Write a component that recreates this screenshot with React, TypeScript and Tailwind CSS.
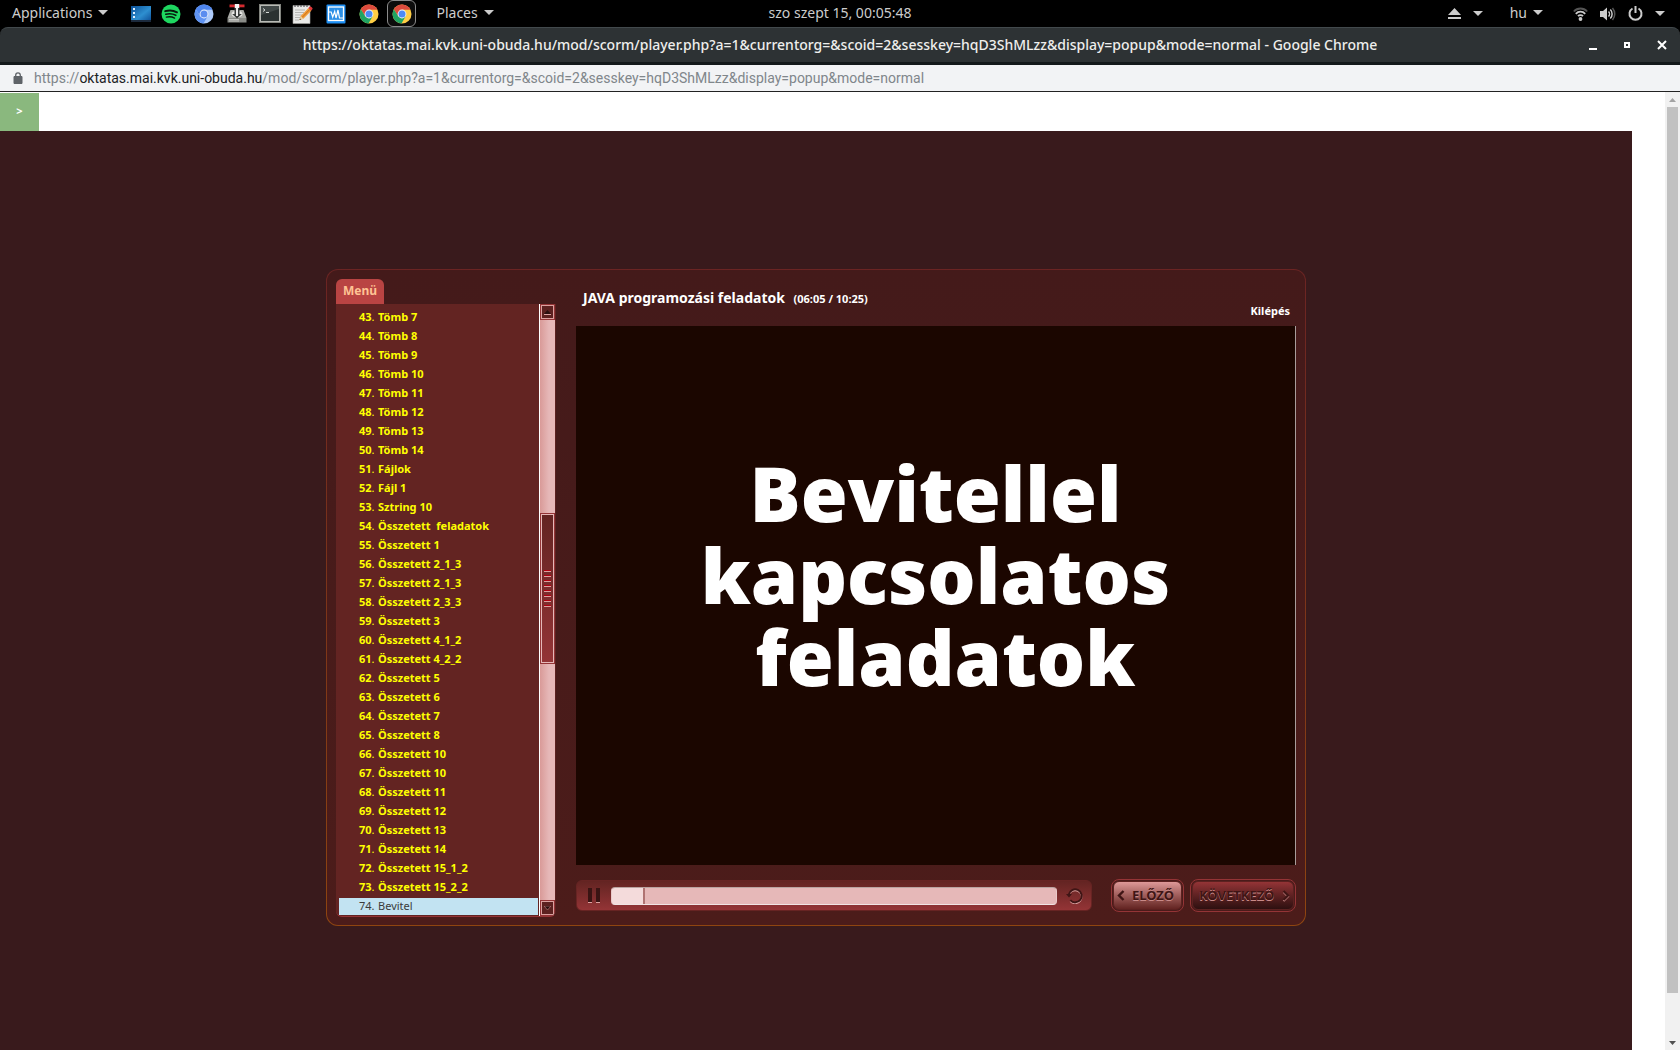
import React from 'react';

const chapters = [
  'Tömb 6_2', 'Tömb 7', 'Tömb 8', 'Tömb 9', 'Tömb 10', 'Tömb 11', 'Tömb 12', 'Tömb 13', 'Tömb 14',
  'Fájlok', 'Fájl 1', 'Sztring 10', 'Összetett  feladatok', 'Összetett 1', 'Összetett 2_1_3',
  'Összetett 2_1_3', 'Összetett 2_3_3', 'Összetett 3', 'Összetett 4_1_2', 'Összetett 4_2_2',
  'Összetett 5', 'Összetett 6', 'Összetett 7', 'Összetett 8', 'Összetett 10', 'Összetett 10',
  'Összetett 11', 'Összetett 12', 'Összetett 13', 'Összetett 14', 'Összetett 15_1_2',
  'Összetett 15_2_2', 'Bevitel',
];
const FIRST = 42;
const CURRENT = 74;

function Caret() {
  return (
    <svg width="10" height="5" viewBox="0 0 10 5" aria-hidden="true">
      <path d="M0 0h10L5 5z" fill="#ccc" />
    </svg>
  );
}

function DesktopIcon() {
  return (
    <svg width="20" height="16" viewBox="0 0 20 16" aria-hidden="true">
      <defs>
        <linearGradient id="desk" x1="0" y1="0" x2="1" y2="1">
          <stop offset="0" stopColor="#0b4f96" />
          <stop offset="0.55" stopColor="#2e8fd0" />
          <stop offset="1" stopColor="#0b4a94" />
        </linearGradient>
      </defs>
      <rect width="20" height="16" fill="url(#desk)" />
      <rect y="14" width="20" height="2" fill="#1c2a3c" />
      <path d="M2 2h2v2H2zM2 6h2v2H2zM2 10h2v2H2z" fill="#dff0ff" />
    </svg>
  );
}

function SpotifyIcon() {
  return (
    <svg width="20" height="20" viewBox="0 0 20 20" aria-hidden="true">
      <circle cx="10" cy="10" r="9.5" fill="#1ed760" />
      <g fill="none" stroke="#06180c" strokeLinecap="round">
        <path d="M4.2 7.2c4-1.2 8.300-.8 11.800 1.100" strokeWidth="1.900" />
        <path d="M4.800 10.300c3.500-1 7-.6 10 1" strokeWidth="1.600" />
        <path d="M5.300 13.200c3-.8 5.800-.5 8.300.9" strokeWidth="1.300" />
      </g>
    </svg>
  );
}

function ChromeIcon({ colors, center }: { colors: [string, string, string]; center: string }) {
  return (
    <svg width="20" height="20" viewBox="0 0 20 20" aria-hidden="true">
      <circle cx="10" cy="10" r="9.500" fill={colors[2]} />
      <path d="M10 5.700h8.500A9.500 9.500 0 0 0 1.800 5.200L6.300 12.200 10 10z" fill={colors[0]} />
      <path d="M1.800 5.200A9.500 9.500 0 0 0 9.500 19.500L13.800 12.100 10 14.300 6.300 12.200z" fill={colors[1]} />
      <circle cx="10" cy="10" r="4.400" fill="#f3f6fb" />
      <circle cx="10" cy="10" r="3.500" fill={center} />
    </svg>
  );
}

function InstallerIcon() {
  return (
    <svg width="20" height="20" viewBox="0 0 20 20" aria-hidden="true">
      <path d="M3.500 6h13l3 8H.5z" fill="#a9aaa6" />
      <path d="M.5 14h19v4.500H.5z" fill="#8a8c88" />
      <path d="M2 15.500h10M2 17h10" stroke="#d8d9d6" strokeWidth=".8" />
      <ellipse cx="10" cy="10" rx="5.500" ry="3.600" fill="#e6e6e4" />
      <path d="M7.500 2h5v8h2.300L10 14.500 5.200 10h2.300z" fill="#3a3d3c" />
      <path d="M9 3h2v9H9z" fill="#ececec" />
      <path d="M2.500.5h15v2.800h-15z" fill="#d42a2f" />
      <path d="M7.800 0h4.400v4H7.800z" fill="#f4f4f4" />
    </svg>
  );
}

function TerminalIcon() {
  return (
    <svg width="22" height="19" viewBox="0 0 22 19" aria-hidden="true">
      <rect x=".5" y=".5" width="21" height="18" fill="#b8bab5" stroke="#83857f" />
      <rect x="2" y="2" width="18" height="15" fill="#2b3231" />
      <path d="M2 2h18v3L2 11z" fill="#414847" />
      <path d="M4 4.500l2 1.500-2 1.500M7 8.500h3" fill="none" stroke="#d5dad6" strokeWidth="1" />
    </svg>
  );
}

function NotesIcon() {
  return (
    <svg width="21" height="20" viewBox="0 0 21 20" aria-hidden="true">
      <path d="M1 1.500h17v18H1z" fill="#e9e9e7" stroke="#a5a5a1" strokeWidth=".6" />
      <path d="M3 1v2M6 1v2M9 1v2M12 1v2M15 1v2" stroke="#55565a" strokeWidth="1.200" />
      <path d="M3 6h10M3 8.500h9M3 11h7M3 13.500h5M3 16h4" stroke="#b5b5b2" strokeWidth="1" />
      <path d="M7.500 16l1.200-4L16.500 4l2.800 2.700-7.900 8.100z" fill="#f09a36" />
      <path d="M10 13.500l7.800-8.100" stroke="#c26a12" strokeWidth=".9" />
      <path d="M16.300 4.100l1.500-1.500c.9-.6 3.300 1.600 2.700 2.500l-1.400 1.600z" fill="#e0383a" />
      <path d="M7.500 16l1.200-4 2.700 2.800z" fill="#e9cfa0" />
      <path d="M7.500 16l.5-1.500 1 1z" fill="#222" />
    </svg>
  );
}

function MonitorIcon() {
  return (
    <svg width="20" height="20" viewBox="0 0 20 20" aria-hidden="true">
      <rect x=".5" y=".5" width="19" height="19" rx="1" fill="#1e90f5" />
      <rect x="2.500" y="3" width="15" height="13.500" fill="#2b8fe6" stroke="#fff" strokeWidth="1.300" />
      <path d="M3 8h2.200l1.500 5 2-5.500 1.300 6.500 2-8 1.500 8H17" fill="none" stroke="#fff" strokeWidth="1.200" />
    </svg>
  );
}

function DockButton({ label, active, children }: { label: string; active?: boolean; children: React.ReactNode }) {
  return (
    <button
      aria-label={label}
      className={
        active
          ? 'flex h-[27px] w-[29px] items-center justify-center rounded-md border border-[#8b8b8b] bg-[#0c0c0c]'
          : 'flex h-[27px] w-[29px] items-center justify-center'
      }
    >
      {children}
    </button>
  );
}

function TopBar() {
  return (
    <nav className="grid h-[27px] shrink-0 grid-cols-[1fr_auto_1fr] items-center bg-black font-['Noto_Sans',sans-serif] text-sm text-[#cccccc]">
      <div className="flex items-center">
        <button className="flex h-[27px] items-center gap-1.5 pb-0.5 pl-3">Applications <Caret /></button>
        <div className="ml-[21px] flex items-center gap-1">
          <button aria-label="Desktop" className="flex h-[27px] w-[23px] items-center justify-center"><DesktopIcon /></button>
          <DockButton label="Spotify"><SpotifyIcon /></DockButton>
          <DockButton label="Chromium"><ChromeIcon colors={['#4f86ee', '#5f93f2', '#aecbfa']} center="#5b8def" /></DockButton>
          <DockButton label="Installer"><InstallerIcon /></DockButton>
          <DockButton label="Terminal"><TerminalIcon /></DockButton>
          <DockButton label="Notes"><NotesIcon /></DockButton>
          <DockButton label="System monitor"><MonitorIcon /></DockButton>
          <DockButton label="Chrome"><ChromeIcon colors={['#dd4b3e', '#1fa463', '#ffce45']} center="#4c8bf5" /></DockButton>
          <DockButton label="Chrome window" active><ChromeIcon colors={['#dd4b3e', '#1fa463', '#ffce45']} center="#4c8bf5" /></DockButton>
        </div>
        <button className="ml-5 flex h-[27px] items-center gap-1.5 pb-0.5">Places <Caret /></button>
      </div>
      <time className="pb-0.5">szo szept 15, 00:05:48</time>
      <div className="flex items-center justify-end pr-[15px]">
        <button aria-label="Removable devices" className="flex items-center gap-3">
          <svg width="13" height="11" viewBox="0 0 13 11" aria-hidden="true">
            <path d="M6.500 0L13 7H0zM0 9h13v2H0z" fill="#ccc" />
          </svg>
          <Caret />
        </button>
        <button className="ml-[27px] flex h-[27px] items-center gap-1.5 pb-0.5">hu <Caret /></button>
        <button aria-label="System menu" className="ml-[30px] flex items-center gap-3">
          <svg width="15" height="14" viewBox="0 0 15 14" fill="none" aria-hidden="true">
            <path d="M.8 4.500c3.700-4 9.700-4 13.400 0" stroke="#555" strokeWidth="1.800" />
            <path d="M2.800 6.800c2.600-2.800 6.800-2.800 9.400 0M5 9.200c1.400-1.500 3.600-1.500 5 0" stroke="#ccc" strokeWidth="1.800" />
            <circle cx="7.500" cy="12" r="1.900" fill="#ccc" />
          </svg>
          <svg width="16" height="14" viewBox="0 0 16 14" fill="none" aria-hidden="true">
            <path d="M0 4h3l4-3.500v13L3 10H0z" fill="#ccc" />
            <path d="M8.500 4.500c1.300 1.300 1.300 3.700 0 5M10.300 2.500c2.400 2.400 2.400 6.600 0 9" stroke="#ccc" strokeWidth="1.500" />
            <path d="M12.500 1c3 3.500 3 8.500 0 12" stroke="#555" strokeWidth="1.500" />
          </svg>
          <svg width="15" height="15" viewBox="0 0 15 15" fill="none" stroke="#ccc" strokeWidth="2" aria-hidden="true">
            <path d="M4.500 2.500a6 6 0 1 0 6 0M7.500 0v7" />
          </svg>
          <Caret />
        </button>
      </div>
    </nav>
  );
}

function TitleBar() {
  return (
    <header className="shrink-0 bg-black">
      <div className="grid h-[38px] grid-cols-[1fr_auto_1fr] items-center rounded-t-lg border-t border-b-3 border-t-[#42494c] border-b-[#14191b] bg-[#2d3234] font-['Noto_Sans',sans-serif] text-[#eeeeec]">
        <span />
        <h1 className="truncate text-sm font-medium">
          https://oktatas.mai.kvk.uni-obuda.hu/mod/scorm/player.php?a=1&amp;currentorg=&amp;scoid=2&amp;sesskey=hqD3ShMLzz&amp;display=popup&amp;mode=normal - Google Chrome
        </h1>
        <div className="flex items-center justify-end gap-[26px] pr-[13px]">
          <button aria-label="Minimize">
            <svg width="9" height="9" viewBox="0 0 9 9" aria-hidden="true"><path d="M1 7h8v2H1z" fill="#fff" /></svg>
          </button>
          <button aria-label="Maximize">
            <svg width="8" height="8" viewBox="0 0 8 8" aria-hidden="true"><rect x="2" y="2" width="4" height="4" fill="none" stroke="#fff" strokeWidth="2" /></svg>
          </button>
          <button aria-label="Close">
            <svg width="10" height="10" viewBox="0 0 10 10" aria-hidden="true"><path d="M1 1l8 8M9 1L1 9" stroke="#fff" strokeWidth="2" /></svg>
          </button>
        </div>
      </div>
    </header>
  );
}

function AddressBar() {
  return (
    <div className="flex h-[27px] shrink-0 items-center border-b border-[#222] bg-[#f2f3f5] pl-[13px] font-['Roboto',sans-serif] text-sm text-[#80868b]">
      <svg width="10" height="12" viewBox="0 0 10 12" className="mr-[11px] shrink-0" aria-hidden="true">
        <path d="M1 4.500h8v7H1z" fill="#5f6368" stroke="#5f6368" />
        <path d="M2.700 5V3.200a2.300 2.300 0 0 1 4.600 0V5" fill="none" stroke="#5f6368" strokeWidth="1.300" />
      </svg>
      <p className="truncate">
        https://<span className="text-[#202124]">oktatas.mai.kvk.uni-obuda.hu</span>/mod/scorm/player.php?a=1&amp;currentorg=&amp;scoid=2&amp;sesskey=hqD3ShMLzz&amp;display=popup&amp;mode=normal
      </p>
    </div>
  );
}

function ArrowBox({ label, down }: { label: string; down?: boolean }) {
  return (
    <button
      aria-label={label}
      className="flex h-4 w-[15px] shrink-0 items-center justify-center border border-[#943436] bg-[#5c2120] outline-1 -outline-offset-2 outline-[#dba09f]"
    >
      <svg width="7" height="5" viewBox="0 0 7 5" aria-hidden="true">
        {down ? (
          <path d="M0 0h7L3.500 4z" fill="#2a0f0f" stroke="#c98a88" strokeWidth=".6" />
        ) : (
          <><path d="M0 4h7L3.500 0z" fill="#2a0f0f" /><path d="M0 4.500h7" stroke="#dba09f" /></>
        )}
      </svg>
    </button>
  );
}

function ChapterMenu() {
  return (
    <aside className="flex w-[220px] shrink-0 flex-col pt-[9px] pb-2">
      <h2 className="flex h-[25px] w-12 shrink-0 justify-center rounded-t-md bg-[#b94443] pt-1 text-xs leading-4 font-bold text-[#ffc394]">
        Menü
      </h2>
      <div className="flex flex-1 overflow-hidden rounded-b-md border-r border-b border-r-[#5c2120] border-b-[#943436] bg-[#632422] contain-size">
        <ol className="flex min-w-0 flex-1 flex-col justify-end overflow-hidden pr-px pl-[3px]">
          {chapters.map((name, i) => {
            const n = FIRST + i;
            return (
              <li key={n} className="h-[19px] shrink-0 py-px">
                <a
                  href={'#' + n}
                  className={
                    n === CURRENT
                      ? 'flex h-[17px] items-center bg-[#c2e3f2] pl-5 text-[11px] whitespace-pre text-[#3b3b3b]'
                      : 'flex h-[17px] items-center pl-5 text-[11px] font-bold whitespace-pre text-[#ffff00]'
                  }
                >
                  <span className="w-[19px]">{n}<span className="font-normal">.</span></span>
                  {name}
                </a>
              </li>
            );
          })}
        </ol>
        <div className="flex w-4 shrink-0 flex-col border-l border-white bg-linear-to-r from-[#d99a98] to-[#e6b8b8] to-60%">
          <ArrowBox label="Scroll up" />
          <div className="flex-194" />
          <div className="flex flex-149 flex-col items-center justify-center gap-[3px] border border-[#943436] bg-linear-to-b from-[#632422] to-[#943436] outline-1 -outline-offset-2 outline-[#e6b8b8]">
            {Array.from({ length: 8 }, (_, i) => (
              <span key={i} className="h-0.5 w-[7px] border-t border-b border-t-[#b00010] border-b-[#dba09f]" />
            ))}
          </div>
          <div className="flex-237" />
          <ArrowBox label="Scroll down" down />
        </div>
      </div>
    </aside>
  );
}

function Controls() {
  return (
    <div className="mt-[14px] flex h-[33px] items-center">
      <div className="flex h-[31px] min-w-0 flex-1 items-center rounded-md border border-[#672423] bg-linear-to-b from-[#632422] to-[#943436] pr-2 pl-[11px]">
        <button aria-label="Pause" className="flex h-[15px] w-3 shrink-0 gap-1">
          <span className="h-full flex-1 border-b border-[#dba09f] bg-[#3a1413]" />
          <span className="h-full flex-1 border-b border-[#dba09f] bg-[#3a1413]" />
        </button>
        <input
          type="range"
          aria-label="Progress"
          min={0}
          max={1000}
          defaultValue={70}
          className="mr-[9px] ml-[11px] h-[18px] min-w-0 flex-1 appearance-none rounded border border-[#e9c9c9] border-t-[#b9a3a0] border-b-[#f0e4e4] bg-[linear-gradient(to_right,#f4dbdb_7.200%,#e6b8b8_7.200%)] [&::-webkit-slider-thumb]:h-4 [&::-webkit-slider-thumb]:w-0.5 [&::-webkit-slider-thumb]:appearance-none [&::-webkit-slider-thumb]:bg-[#b07372]"
        />
        <button aria-label="Restart" className="shrink-0">
          <svg width="17" height="17" viewBox="0 0 17 17" fill="none" aria-hidden="true">
            <path d="M4.300 14.200A6.500 6.500 0 1 0 2.800 8.500" stroke="#dba09f" strokeWidth="1.600" />
            <path d="M4.300 13.200A6.500 6.500 0 1 0 2.800 7.500" stroke="#3f1515" strokeWidth="2" />
            <path d="M0 7h6L3 10.500z" fill="#3f1515" />
          </svg>
        </button>
      </div>
      <button className="ml-[19px] flex h-[33px] w-[73px] shrink-0 rounded-lg border border-[#943436] bg-[#4a1b1a] p-px text-[13px] font-bold text-[#3f1515]">
        <span className="flex h-full flex-1 items-center justify-between rounded-md border border-[#5c2120] bg-linear-to-b from-[#dd9998] to-[#632422] pr-[7px] pl-[3px] text-shadow-[0_1px_0_#c98a88]">
          <svg width="8" height="11" viewBox="0 0 8 11" fill="none" aria-hidden="true"><path d="M6.500 1L2 5.500 6.500 10" stroke="#3f1515" strokeWidth="2.400" /></svg>
          ELŐZŐ
        </span>
      </button>
      <button className="ml-1.5 flex h-[33px] w-[106px] shrink-0 rounded-lg border border-[#943436] bg-[#4a1b1a] p-px text-[13px] font-bold text-[#3f1515]">
        <span className="flex h-full flex-1 items-center justify-between rounded-md border border-[#5c2120] bg-linear-to-b from-[#943436] to-[#2e1010] pr-[3px] pl-1.5 text-shadow-[0_1px_0_#c98a88]">
          KÖVETKEZŐ
          <svg width="8" height="12" viewBox="0 0 8 12" fill="none" aria-hidden="true">
            <path d="M1.500 2L6 6.500 1.500 11" stroke="#c98a88" strokeWidth="2" />
            <path d="M1.500 1L6 5.500 1.500 10" stroke="#3f1515" strokeWidth="2.200" />
          </svg>
        </span>
      </button>
    </div>
  );
}

function Player() {
  return (
    <section className="mx-auto flex w-full max-w-[980px] gap-5 rounded-xl border border-transparent px-[9px] font-['Noto_Sans',sans-serif] [background:linear-gradient(#441a1a,#4c1c1a)_padding-box,linear-gradient(#6b2423,#8f4510)_border-box]">
      <ChapterMenu />
      <div className="min-w-0 flex-1 pb-[13px]">
        <header className="flex h-14 justify-between pr-1.5 pl-[7px] font-bold text-white">
          <h2 className="pt-[18px] text-sm leading-5">
            JAVA programozási feladatok <span className="ml-[5px] text-[11px]">(06:05 / 10:25)</span>
          </h2>
          <a href="#exit" className="pt-8 text-[11px] leading-[18px]">Kilépés</a>
        </header>
        <div className="flex aspect-[720/539] items-center justify-center border-r border-[#a89c9a] bg-[#1b0600] pb-[42px]">
          <p className="text-center font-['Open_Sans',sans-serif] text-[76px] leading-[82px] font-extrabold whitespace-pre text-white">
            {'Bevitellel\nkapcsolatos\n feladatok'}
          </p>
        </div>
        <Controls />
      </div>
    </section>
  );
}

function PageScrollbar() {
  return (
    <div className="flex w-[15px] shrink-0 flex-col items-center bg-[#f1f1f1]">
      <button aria-label="Page up" className="flex h-[15px] w-full items-center justify-center">
        <svg width="7" height="4" viewBox="0 0 7 4" aria-hidden="true"><path d="M0 4h7L3.500 0z" fill="#a3a3a3" /></svg>
      </button>
      <div className="w-[11px] flex-[886] bg-[#c1c1c1]" />
      <div className="flex-[42]" />
      <button aria-label="Page down" className="flex h-[15px] w-full items-center justify-center">
        <svg width="7" height="4" viewBox="0 0 7 4" aria-hidden="true"><path d="M0 0h7L3.500 4z" fill="#505050" /></svg>
      </button>
    </div>
  );
}

export default function App() {
  return (
    <div className="flex min-h-screen flex-col bg-white">
      <TopBar />
      <TitleBar />
      <AddressBar />
      <div className="flex flex-1">
        <main className="flex min-w-0 flex-1 flex-col pt-px">
          <button aria-label="Open navigation" className="flex h-[38px] w-[39px] shrink-0 items-center justify-center bg-[#8ab87e] pb-px font-['Noto_Sans',sans-serif] text-[11px] font-bold text-white">
            &gt;
          </button>
          <div className="mr-[33px] flex-1 bg-[#391a1c] pt-[138px] pb-10">
            <Player />
          </div>
        </main>
        <PageScrollbar />
      </div>
    </div>
  );
}
